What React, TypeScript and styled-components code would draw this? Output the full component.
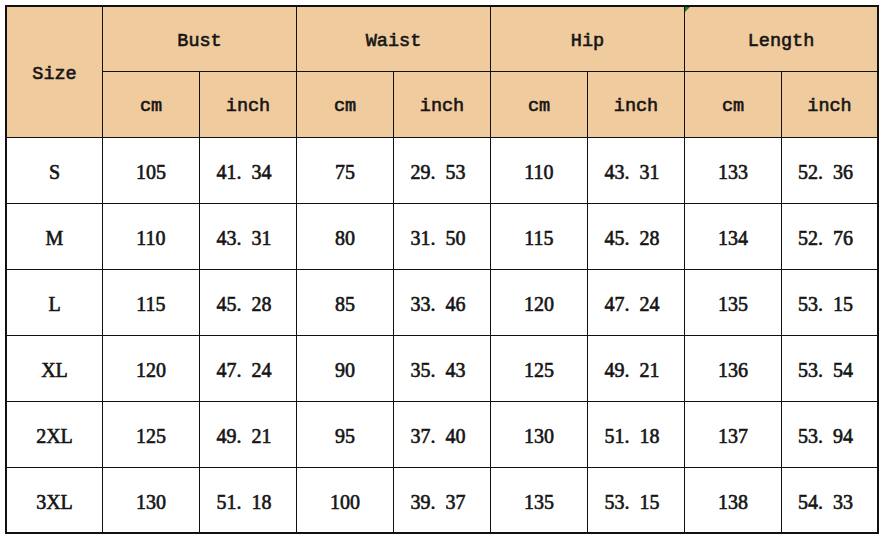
import React from "react";
import styled, { createGlobalStyle } from "styled-components";

const GlobalStyle = createGlobalStyle`
	html, body {
		margin: 0;
		padding: 0;
		background: #fff;
	}
`;

const Page = styled.div`
	padding: 5px 0 0 5px;
`;

const Grid = styled.div`
	display: grid;
	grid-template-columns: 95px repeat(7, 96px) 95px;
	grid-template-rows: 64px repeat(6, 65px) 64px;
	gap: 1px;
	width: max-content;
	background: #111;
	border: 2px solid #111;
`;

const Cell = styled.div<{
	$head?: boolean;
	$rows?: number;
	$cols?: number;
	$dec?: boolean;
}>`
	position: relative;
	display: flex;
	align-items: center;
	justify-content: center;
	padding: 4px ${(p) => (p.$dec ? "8px" : "0")} 0 0;
	box-sizing: border-box;
	background: ${(p) => (p.$head ? "#efcb9e" : "#fff")};
	color: #151515;
	grid-row: span ${(p) => p.$rows || 1};
	grid-column: span ${(p) => p.$cols || 1};
	font-family: ${(p) =>
		p.$head
			? `"Liberation Mono", "DejaVu Sans Mono", monospace`
			: `"Liberation Serif", "DejaVu Serif", serif`};
	font-weight: normal;
	font-size: ${(p) => (p.$head ? "18.5px" : "20px")};
	-webkit-text-stroke: 0.6px #151515;
	white-space: pre;
`;

const Marker = styled.span`
	position: absolute;
	top: 0;
	left: 0;
	width: 0;
	height: 0;
	border-top: 5px solid #1f7a1f;
	border-right: 5px solid transparent;
`;

const groups = ["Bust", "Waist", "Hip", "Length"];

const rows: string[][] = [
	["S", "105", "41.34", "75", "29.53", "110", "43.31", "133", "52.36"],
	["M", "110", "43.31", "80", "31.50", "115", "45.28", "134", "52.76"],
	["L", "115", "45.28", "85", "33.46", "120", "47.24", "135", "53.15"],
	["XL", "120", "47.24", "90", "35.43", "125", "49.21", "136", "53.54"],
	["2XL", "125", "49.21", "95", "37.40", "130", "51.18", "137", "53.94"],
	["3XL", "130", "51.18", "100", "39.37", "135", "53.15", "138", "54.33"],
];

// the source sheet prints a wide gap after the decimal point
const show = (v: string) => v.replace(".", ".\u2002");

export default function App() {
	return (
		<Page>
			<GlobalStyle />
			<Grid>
				<Cell $head $rows={2}>
					Size
				</Cell>
				{groups.map((g) => (
					<Cell key={g} $head $cols={2}>
						{g === "Length" && <Marker />}
						{g}
					</Cell>
				))}
				{groups.map((g) => (
					<React.Fragment key={g}>
						<Cell $head>cm</Cell>
						<Cell $head>inch</Cell>
					</React.Fragment>
				))}
				{rows.map((r) =>
					r.map((v, i) => (
						<Cell key={r[0] + i} $dec={v.includes(".")}>
							{show(v)}
						</Cell>
					))
				)}
			</Grid>
		</Page>
	);
}
